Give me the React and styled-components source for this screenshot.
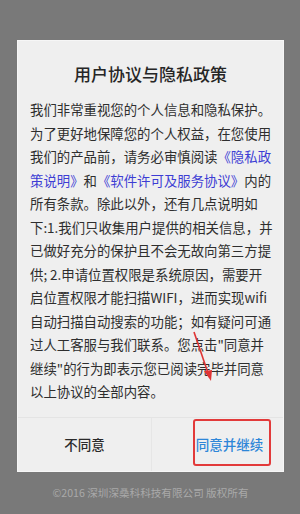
import React from "react";
import styled, { createGlobalStyle } from "styled-components";

const Global = createGlobalStyle`
  html, body { margin: 0; padding: 0; background: #797979; }
  body { font-family: "Noto Sans CJK SC", "Noto Sans", sans-serif; }
`;

const Screen = styled.div`
  width: 300px;
  height: 514px;
  box-sizing: border-box;
  padding: 40px 16px 0 17px;
  display: flex;
  flex-direction: column;
  background: #797979;
  overflow: hidden;
`;

const Dialog = styled.div`
  position: relative;
  background: #efefef;
  border: 1px solid #f6f6f6;
  box-sizing: border-box;
  display: flex;
  flex-direction: column;
`;

const Title = styled.h1`
  margin: 0;
  padding: 21px 0 0;
  height: 45px;
  box-sizing: border-box;
  line-height: 24px;
  font-size: 17px;
  font-weight: 500;
  color: #262626;
  text-align: center;
`;

const Body = styled.div`
  padding: 12px 0 13px 12px;
  font-size: 13.4px;
  line-height: 23.5px;
  color: #2e2e2e;
`;

const Line = styled.div`
  white-space: nowrap;
`;

const Link = styled.span`
  color: #3d3dd4;
`;

const Buttons = styled.div`
  display: grid;
  grid-template-columns: 133px 1fr;
  height: 53px;
  border-top: 1px solid #e4e4e4;
`;

const Button = styled.div`
  position: relative;
  display: flex;
  align-items: center;
  justify-content: center;
  padding-left: ${(p) => (p.$shift ? "24px" : "0")};
  padding-bottom: 1px;
  font-size: 13.5px;
  font-weight: 500;
  color: ${(p) => (p.$primary ? "#2d86d8" : "#2a2a2a")};
  border-left: ${(p) => (p.$divider ? "1px solid #e6e6e6" : "none")};
`;

const Highlight = styled.div`
  position: absolute;
  left: 41px;
  top: 1px;
  width: 78px;
  height: 47px;
  box-sizing: border-box;
  border: 2px solid #e23a3a;
  border-radius: 3px;
`;

const Arrow = styled.svg`
  position: absolute;
  left: 172px;
  top: 288px;
`;

const Footer = styled.div`
  margin-top: auto;
  height: 43px;
  display: flex;
  align-items: center;
  justify-content: center;
  font-size: 10.6px;
  color: #a9a9a9;
  white-space: nowrap;
`;

export default function App() {
  return (
    <>
      <Global />
      <Screen>
        <Dialog>
          <Title>用户协议与隐私政策</Title>
          <Body>
            <Line>我们非常重视您的个人信息和隐私保护。</Line>
            <Line>为了更好地保障您的个人权益，在您使用</Line>
            <Line>
              我们的产品前，请务必审慎阅读<Link>《隐私政</Link>
            </Line>
            <Line>
              <Link>策说明》</Link>和<Link>《软件许可及服务协议》</Link>内的
            </Line>
            <Line>所有条款。除此以外，还有几点说明如</Line>
            <Line>下:1.我们只收集用户提供的相关信息，并</Line>
            <Line>已做好充分的保护且不会无故向第三方提</Line>
            <Line>供; 2.申请位置权限是系统原因，需要开</Line>
            <Line>启位置权限才能扫描WIFI，进而实现wifi</Line>
            <Line>自动扫描自动搜索的功能；如有疑问可通</Line>
            <Line>过人工客服与我们联系。您点击"同意并</Line>
            <Line>继续"的行为即表示您已阅读完毕并同意</Line>
            <Line>以上协议的全部内容。</Line>
          </Body>
          <Buttons>
            <Button>不同意</Button>
            <Button $primary $shift $divider>
              同意并继续
              <Highlight />
            </Button>
          </Buttons>
          <Arrow width="34" height="56" viewBox="0 0 34 56">
            <line x1="4" y1="3" x2="18" y2="44" stroke="#e03434" strokeWidth="1.6" />
            <polygon points="14,42 22,41 21,52" fill="#e03434" />
          </Arrow>
        </Dialog>
        <Footer>©2016 深圳深桑科科技有限公司 版权所有</Footer>
      </Screen>
    </>
  );
}
